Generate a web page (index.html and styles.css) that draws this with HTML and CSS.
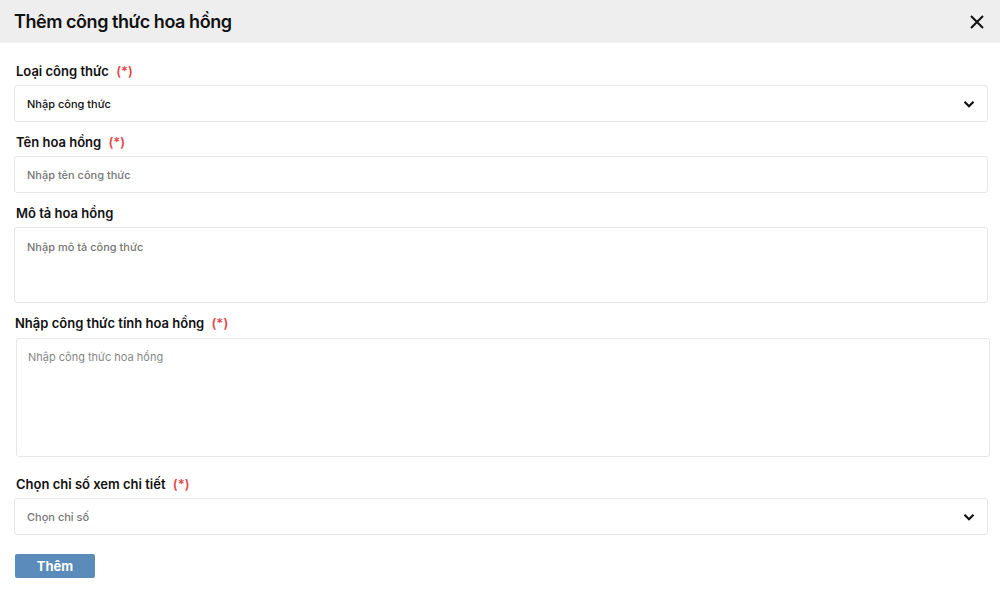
FILE: index.html
```html
<!DOCTYPE html>
<html lang="vi">
<head>
<meta charset="utf-8">
<title>Thêm công thức hoa hồng</title>
<link rel="stylesheet" href="styles.css">
</head>
<body>
<div class="modal">
  <header class="modal-header">
    <h1 class="modal-title">Thêm công thức hoa hồng</h1>
    <button class="close-btn" aria-label="Đóng">
      <svg width="16" height="16" viewBox="0 0 16 16"><path d="M2 2L14 14M14 2L2 14" stroke="#111" stroke-width="2" fill="none"/></svg>
    </button>
  </header>
  <div class="modal-body">
    <div class="group">
      <label class="label">Loại công thức <span class="req">(*)</span></label>
      <div class="field select">
        <span class="value">Nhập công thức</span>
        <svg class="chev" width="14" height="14" viewBox="0 0 14 14"><path d="M2.5 4.8L7 9.2L11.5 4.8" stroke="#111" stroke-width="2.2" fill="none"/></svg>
      </div>
    </div>
    <div class="group">
      <label class="label">Tên hoa hồng <span class="req">(*)</span></label>
      <div class="field"><span class="ph">Nhập tên công thức</span></div>
    </div>
    <div class="group">
      <label class="label">Mô tả hoa hồng</label>
      <div class="field area area-sm"><span class="ph">Nhập mô tả công thức</span></div>
    </div>
    <div class="group">
      <label class="label">Nhập công thức tính hoa hồng <span class="req">(*)</span></label>
      <div class="field area area-lg"><span class="ph light">Nhập công thức hoa hồng</span></div>
    </div>
    <div class="group">
      <label class="label">Chọn chỉ số xem chi tiết <span class="req">(*)</span></label>
      <div class="field select">
        <span class="ph">Chọn chỉ số</span>
        <svg class="chev" width="14" height="14" viewBox="0 0 14 14"><path d="M2.5 4.8L7 9.2L11.5 4.8" stroke="#111" stroke-width="2.2" fill="none"/></svg>
      </div>
    </div>
    <button class="submit">Thêm</button>
  </div>
</div>
</body>
</html>
```
FILE: styles.css
```css
* { box-sizing: border-box; }
html, body { margin: 0; padding: 0; background: #fff; }
body { font-family: Inter, "Noto Sans", sans-serif; color: #111; }

.modal { width: 1000px; }

.modal-header {
  height: 43px;
  background: #eeeeee;
  display: flex;
  align-items: center;
  justify-content: space-between;
  padding: 0 14px 0 14px;
}
.modal-title {
  margin: 0;
  font-size: 18px;
  font-weight: 600;
  color: #111;
  letter-spacing: -0.45px;
}
.close-btn {
  background: none;
  border: 0;
  padding: 0;
  width: 18px;
  height: 18px;
  display: flex;
  align-items: center;
  justify-content: center;
}

.modal-body {
  padding: 21px 12px 0 14px;
  display: flex;
  flex-direction: column;
}

.group { display: flex; flex-direction: column; margin-bottom: 13px; }
.label {
  font-size: 13px;
  line-height: 14px;
  font-weight: 600;
  padding-left: 2px;
  margin-bottom: 7px;
}
.group:nth-child(4) .label { padding-left: 1px; margin-bottom: 8px; }
.req { color: #e2464a; margin-left: 4px; }

.field {
  height: 37px;
  border: 1px solid #e6e6e6;
  border-radius: 3px;
  display: flex;
  align-items: center;
  padding: 0 12px;
  font-size: 11px;
}
.select { justify-content: space-between; padding-right: 11px; }
.value { color: #111; font-weight: 500; }
.ph { color: #777; font-weight: 500; }
.ph.light { color: #888; font-weight: 400; }

.area { align-items: flex-start; padding-top: 12px; }
.area-sm { height: 76px; }
.area-lg { height: 119px; margin-left: 2px; margin-right: -2px; padding-top: 11px; padding-left: 11px; margin-bottom: 7px; }

.chev { display: block; }

.submit {
  align-self: flex-start;
  margin-top: 6px;
  margin-left: 1px;
  width: 80px;
  height: 24px;
  border: 0;
  border-radius: 2px;
  background: #5a8bba;
  color: #fff;
  font-family: Inter, "Noto Sans", sans-serif;
  font-size: 13px;
  font-weight: 700;
  padding: 0;
}
```
